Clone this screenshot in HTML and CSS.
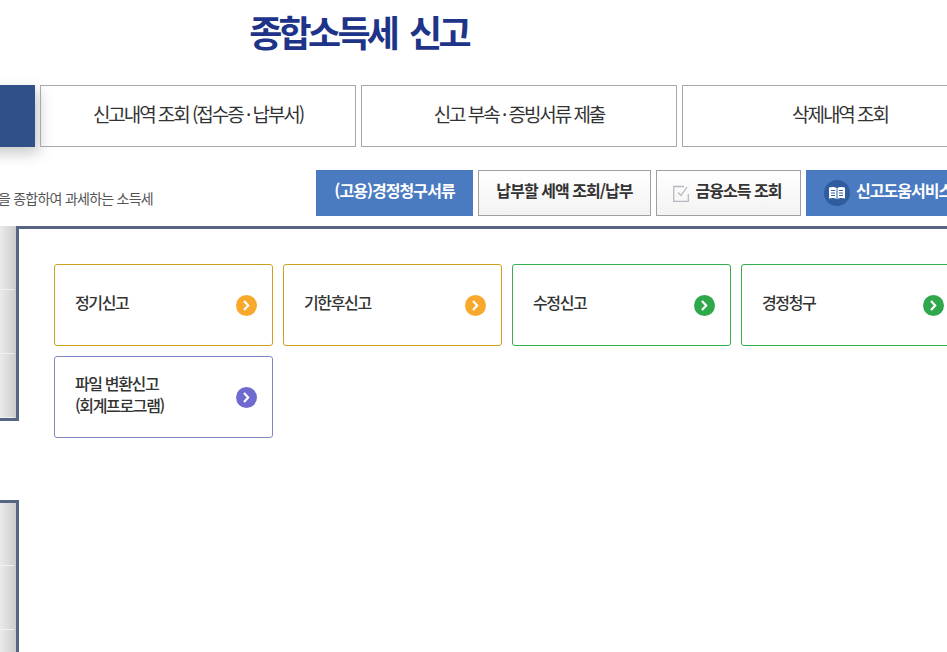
FILE: index.html
```html
<!DOCTYPE html>
<html lang="ko">
<head>
<meta charset="utf-8">
<title>종합소득세 신고</title>
<link rel="stylesheet" href="styles.css">
</head>
<body>
<div class="page">
  <h1 class="title">종합소득세&nbsp; 신고</h1>
  <nav class="tabs">
    <a class="tab tab-active">신고서 작성</a>
    <a class="tab">신고내역 조회 (접수증 · 납부서)</a>
    <a class="tab">신고 부속 · 증빙서류 제출</a>
    <a class="tab">삭제내역 조회</a>
  </nav>
  <div class="toolbar">
    <p class="desc">이자, 배당, 사업, 근로, 연금, 기타소득 등을 종합하여 과세하는 소득세</p>
    <div class="actions">
      <a class="btn btn-blue btn-claim">(고용)경정청구서류</a>
      <a class="btn btn-pay">납부할 세액 조회/납부</a>
      <a class="btn btn-fin">
        <svg class="check" width="16" height="17" viewBox="0 0 16 17" fill="none"><path d="M11 1.500H.700v14.800h14.600V9" stroke="#b5b8be" stroke-width="1.300"/><path d="M5 7.500l3 3 6-8.500" stroke="#b5b8be" stroke-width="1.300"/></svg>
        금융소득 조회
      </a>
      <a class="btn btn-blue btn-help">
        <span class="book">
          <svg width="18" height="14" viewBox="0 0 18 14" fill="none"><path d="M1 1.500c3-1 6-.6 8 .8 2-1.400 5-1.800 8-.8v11c-3-1-6-.6-8 .8-2-1.400-5-1.800-8-.8z" fill="#fff"/><path d="M9 2.500v10.500M3 4.500h4M3 7h4M3 9.500h4M11 4.500h4M11 7h4M11 9.500h4" stroke="#2f5c9e" stroke-width="1"/></svg>
        </span>
        신고도움서비스
      </a>
    </div>
  </div>
  <div class="body">
    <aside class="side">
      <ul class="side-box side-first">
        <li></li><li></li><li></li>
      </ul>
      <ul class="side-box side-second">
        <li></li><li></li><li></li>
      </ul>
    </aside>
    <main class="panel">
      <a class="card card-orange"><span>정기신고</span><i class="go"><svg width="9" height="11" viewBox="0 0 9 11" fill="none"><path d="M2 1l4.200 4.500L2 10" stroke="#fff" stroke-width="2.200"/></svg></i></a>
      <a class="card card-orange"><span>기한후신고</span><i class="go"><svg width="9" height="11" viewBox="0 0 9 11" fill="none"><path d="M2 1l4.200 4.500L2 10" stroke="#fff" stroke-width="2.200"/></svg></i></a>
      <a class="card card-green"><span>수정신고</span><i class="go"><svg width="9" height="11" viewBox="0 0 9 11" fill="none"><path d="M2 1l4.200 4.500L2 10" stroke="#fff" stroke-width="2.200"/></svg></i></a>
      <a class="card card-green"><span>경정청구</span><i class="go"><svg width="9" height="11" viewBox="0 0 9 11" fill="none"><path d="M2 1l4.200 4.500L2 10" stroke="#fff" stroke-width="2.200"/></svg></i></a>
      <a class="card card-purple"><span>파일 변환신고<br>(회계프로그램)</span><i class="go"><svg width="9" height="11" viewBox="0 0 9 11" fill="none"><path d="M2 1l4.200 4.500L2 10" stroke="#fff" stroke-width="2.200"/></svg></i></a>
    </main>
  </div>
</div>
</body>
</html>
```
FILE: styles.css
```css
html, body {
  margin: 0;
  height: 100%;
  overflow: hidden;
  background: #fff;
}
.page {
  width: 947px;
  height: 652px;
  overflow: hidden;
  font-family: "Noto Sans CJK KR", "Noto Sans", sans-serif;
  color: #333;
}
.title {
  width: 717px;
  height: 85px;
  margin: 0;
  padding-top: 5px;
  box-sizing: border-box;
  text-align: center;
  font-size: 36px;
  line-height: 52px;
  font-weight: 700;
  letter-spacing: -3.7px;
  color: #1d3488;
}
.tabs {
  display: flex;
  gap: 5px;
  margin-left: -281px;
  width: 1300px;
}
.tab {
  flex: none;
  width: 316px;
  height: 62px;
  box-sizing: border-box;
  border: 1px solid #a9a9a9;
  padding-bottom: 5px;
  display: flex;
  align-items: center;
  justify-content: center;
  font-size: 19px;
  letter-spacing: -2.05px;
  color: #333;
}
.tab-active {
  background: #2f5088;
  border-color: #2f5088;
  color: #fff;
  box-shadow: 4px 6px 14px rgba(0, 0, 0, .22);
}
.toolbar {
  display: flex;
  align-items: stretch;
  justify-content: flex-end;
  width: 1113px;
  margin-left: -153px;
  margin-top: 23px;
  height: 46px;
}
.desc {
  margin: 0 163px 0 0;
  flex: none;
  align-self: flex-end;
  font-size: 14px;
  line-height: 18px;
  padding-bottom: 9px;
  letter-spacing: -.75px;
  color: #555;
  white-space: nowrap;
}
.actions {
  display: flex;
  gap: 5px;
  flex: none;
  width: 644px;
}
.btn {
  flex: none;
  box-sizing: border-box;
  height: 46px;
  padding-bottom: 6px;
  display: flex;
  align-items: center;
  justify-content: center;
  font-size: 16px;
  font-weight: 700;
  letter-spacing: -.95px;
  border: 1px solid #a0a0a0;
  background: linear-gradient(#fff, #f3f3f3);
  color: #333;
  white-space: nowrap;
}
.btn-blue {
  background: #4a7abf;
  border-color: #4a7abf;
  color: #fff;
}
.btn-claim { width: 157px; }
.btn-pay { width: 173px; }
.btn-fin { width: 145px; gap: 6px; }
.btn-fin .check { margin-top: 6px; margin-left: -2px; }
.btn-help {
  width: 164px;
  justify-content: flex-start;
  padding-left: 17px;
  gap: 6px;
}
.book {
  width: 26px;
  height: 26px;
  margin-top: 6px;
  border-radius: 50%;
  background: #2f5c9e;
  display: flex;
  align-items: center;
  justify-content: center;
}
.body {
  display: flex;
  margin-top: 10px;
  height: 426px;
}
.side {
  flex: none;
  width: 19px;
  margin-right: -3px;
  position: relative;
  z-index: 1;
}
.side-box {
  list-style: none;
  margin: 0;
  padding: 0;
  border-right: 3px solid #576482;
  background: linear-gradient(90deg, #e9eaec, #cdcdcd);
}
.side-box li {
  height: 64px;
  box-sizing: border-box;
  border-bottom: 1px solid;
  border-image: linear-gradient(90deg, #f1f1f1 85%, transparent 85%) 1;
}
.side-first {
  border-bottom: 3px solid #576482;
  height: 192px;
}
.side-second {
  margin-top: 79px;
  border-top: 3px solid #576482;
  height: 200px;
}
.side-second li:first-child { height: 63px; }
.panel {
  flex: none;
  width: 960px;
  box-sizing: border-box;
  border-top: 3px solid #576482;
  padding: 35px 0 0 38px;
  display: flex;
  flex-wrap: wrap;
  align-content: flex-start;
  gap: 10px;
}
.card {
  flex: none;
  width: 219px;
  height: 82px;
  box-sizing: border-box;
  border: 1px solid;
  border-radius: 3px;
  padding: 0 15px 0 20px;
  display: flex;
  align-items: center;
  justify-content: space-between;
  font-size: 16px;
  font-weight: 500;
  line-height: 22px;
  letter-spacing: -1.35px;
  color: #333;
}
.card span { margin-top: -6px; }
.go {
  flex: none;
  width: 21px;
  height: 21px;
  border-radius: 50%;
  display: flex;
  align-items: center;
  justify-content: center;
}
.card-orange { border-color: #cf9f1f; }
.card-orange .go { background: #f8a92b; }
.card-green { border-color: #35b04e; }
.card-green .go { background: #2ea84a; }
.card-purple { border-color: #7f86c2; }
.card-purple .go { background: #6f6ad0; }
```
